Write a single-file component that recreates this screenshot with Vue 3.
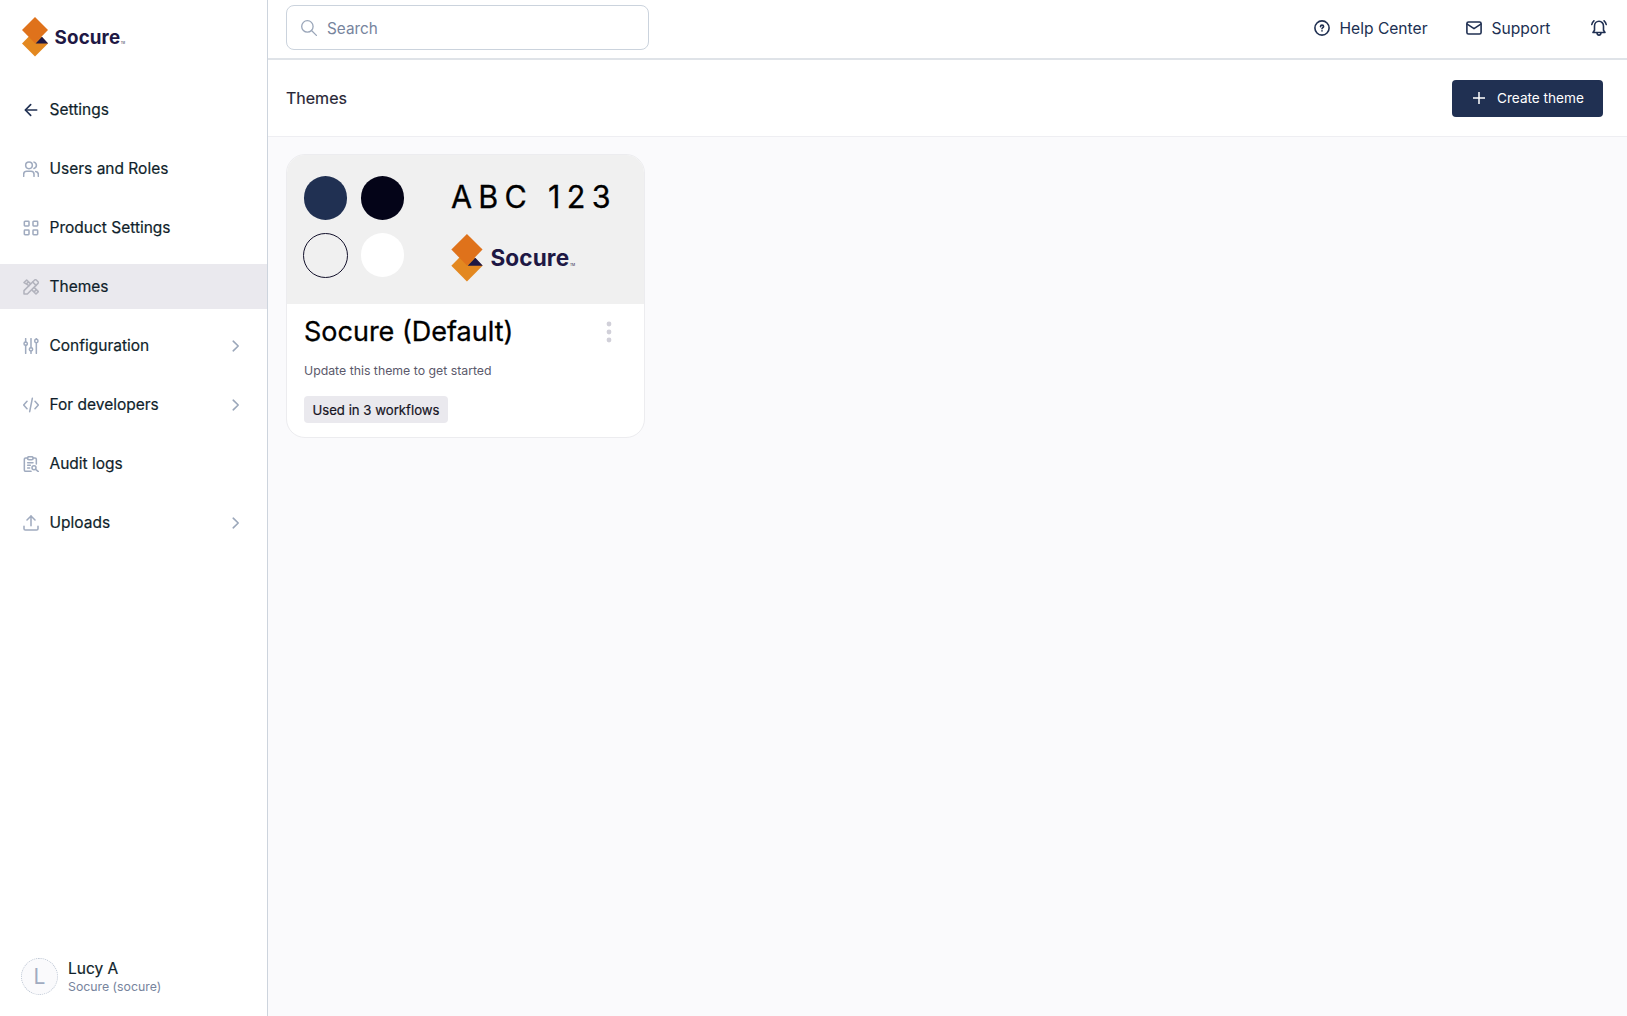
<template>
  <div class="layout">
    <aside class="sidebar">
      <svg class="logo" viewBox="0 0 104 40">
        <path d="M13 13.2L26 26.4L13 39.6L0 26.4z" fill="#e38820" />
        <path d="M13 0L26 13L13 26.2L0 13z" fill="#df721b" />
        <path d="M13.6 26.4L20 19.8L26.2 26.4z" fill="#1e1844" />
        <text class="logo-word" x="32.6" y="26.5" textLength="65.5">Socure</text>
        <text class="logo-tm" x="98.8" y="26.5">TM</text>
      </svg>

      <nav class="nav">
        <a v-for="item in navItems" :key="item.label" class="nav-item" :class="{ active: item.label === current }">
          <svg class="nav-icon" :class="{ back: item.icon === 'back' }" viewBox="0 0 24 24">
            <path v-for="d in icons[item.icon]" :key="d" :d="d" />
          </svg>
          <span class="nav-label">{{ item.label }}</span>
          <svg v-if="item.expandable" class="chevron" viewBox="0 0 8 12">
            <path d="M1.2 1.2L6.2 6L1.2 10.8" />
          </svg>
        </a>
      </nav>

      <div class="user">
        <div class="avatar">L</div>
        <div class="user-info">
          <span class="user-name">Lucy A</span>
          <span class="user-org">Socure (socure)</span>
        </div>
      </div>
    </aside>

    <main class="main">
      <header class="topbar">
        <label class="search">
          <svg class="search-icon" viewBox="0 0 16 16">
            <circle cx="6.4" cy="6.4" r="5.7" />
            <path d="M10.5 10.5L15.4 15.4" />
          </svg>
          <input class="search-input" type="text" placeholder="Search" />
        </label>
        <div class="top-links">
          <a class="top-link help">
            <svg class="top-icon" viewBox="0 0 16 16">
              <circle cx="8" cy="8" r="7.1" />
              <path d="M6.5 6.6C6.6 5.6 7.2 5.1 8 5.1C9 5.1 9.6 5.7 9.6 6.5C9.6 7.6 8 7.6 8 8.8M8 10.8V11" />
            </svg>
            <span>Help Center</span>
          </a>
          <a class="top-link support">
            <svg class="top-icon" viewBox="0 0 16 16">
              <rect x="0.9" y="2" width="14.2" height="12" rx="1.6" />
              <path d="M1.2 4.2L8 8.6L14.8 4.2" />
            </svg>
            <span>Support</span>
          </a>
          <svg class="top-icon" viewBox="0 0 16 16">
            <path d="M2 12.5H14L12.5 10.2V6.2C12.5 3.3 10.5 1.2 8 1.2S3.5 3.3 3.5 6.2V10.2zM6 12.8C6 14.1 6.9 15.1 8 15.1S10 14.1 10 12.8M0.8 4.5C1 3 1.7 1.8 2.9 0.8M15.2 4.5C15 3 14.3 1.8 13.1 0.8" />
          </svg>
        </div>
      </header>

      <div class="page-header">
        <h1 class="page-title">Themes</h1>
        <button class="create-btn">
          <svg class="plus" viewBox="0 0 12 12"><path d="M6 0V12M0 6H12" /></svg>
          <span>Create theme</span>
        </button>
      </div>

      <section class="content">
        <article class="card">
          <div class="preview">
            <div class="swatches">
              <span v-for="name in swatches" :key="name" class="swatch" :class="name"></span>
            </div>
            <div class="brand">
              <span class="sample">ABC 123</span>
              <svg class="brand-logo" viewBox="0 0 104 40">
                <path d="M13 13.2L26 26.4L13 39.6L0 26.4z" fill="#e38820" />
                <path d="M13 0L26 13L13 26.2L0 13z" fill="#df721b" />
                <path d="M13.6 26.4L20 19.8L26.2 26.4z" fill="#1e1844" />
                <text class="logo-word" x="32.6" y="26.5" textLength="65.5">Socure</text>
                <text class="logo-tm" x="98.8" y="26.5">TM</text>
              </svg>
            </div>
          </div>
          <div class="card-body">
            <div class="card-head">
              <h2 class="card-title">Socure (Default)</h2>
              <svg class="dots" viewBox="0 0 6 22">
                <circle cx="3" cy="3" r="2.4" />
                <circle cx="3" cy="11" r="2.4" />
                <circle cx="3" cy="19" r="2.4" />
              </svg>
            </div>
            <p class="card-desc">Update this theme to get started</p>
            <span class="tag">Used in 3 workflows</span>
          </div>
        </article>
      </section>
    </main>
  </div>
</template>

<script setup>
import { ref } from 'vue'

const current = ref('Themes')

const navItems = [
  { label: 'Settings', icon: 'back' },
  { label: 'Users and Roles', icon: 'users' },
  { label: 'Product Settings', icon: 'grid' },
  { label: 'Themes', icon: 'tools' },
  { label: 'Configuration', icon: 'sliders', expandable: true },
  { label: 'For developers', icon: 'code', expandable: true },
  { label: 'Audit logs', icon: 'audit' },
  { label: 'Uploads', icon: 'upload', expandable: true }
]

const swatches = ['primary', 'dark', 'outline', 'light']

const icons = {
  back: ['M20.5 12H4', 'M11.5 4L3.5 12L11.5 20'],
  users: [
    'M4 6.5a5 5 0 1 0 10 0a5 5 0 1 0 -10 0',
    'M1 23v-3a4.5 4.5 0 0 1 4.5 -4.5h6.5a4.5 4.5 0 0 1 4.5 4.5v3',
    'M16.5 1.7a5 5 0 0 1 0 9.6',
    'M19 15.7a4.5 4.5 0 0 1 4 4.5v2.8'
  ],
  grid: [
    'M3 2h5a1 1 0 0 1 1 1v5a1 1 0 0 1 -1 1h-5a1 1 0 0 1 -1 -1v-5a1 1 0 0 1 1 -1z',
    'M16 2h5a1 1 0 0 1 1 1v5a1 1 0 0 1 -1 1h-5a1 1 0 0 1 -1 -1v-5a1 1 0 0 1 1 -1z',
    'M3 15h5a1 1 0 0 1 1 1v5a1 1 0 0 1 -1 1h-5a1 1 0 0 1 -1 -1v-5a1 1 0 0 1 1 -1z',
    'M16 15h5a1 1 0 0 1 1 1v5a1 1 0 0 1 -1 1h-5a1 1 0 0 1 -1 -1v-5a1 1 0 0 1 1 -1z'
  ],
  tools: [
    'M1.5 22.5v-5L17.5 1.5q1.2 -1 2.4 0l2.6 2.6q1 1.2 0 2.4L6.5 22.5z',
    'M14.5 4.5l5 5',
    'M9 10L1.5 5.5L5.5 1.5L11 7M5 7.5l2 -2',
    'M14 17l5.5 5.5l3.5 -3.5L17 13M17 19l2 -2'
  ],
  sliders: [
    'M4 1v5M4 11v12M12 1v13M12 19.5v3.5M20 1v1M20 7v16',
    'M1.5 8.5a2.5 2.5 0 1 0 5 0a2.5 2.5 0 1 0 -5 0',
    'M9.5 17a2.5 2.5 0 1 0 5 0a2.5 2.5 0 1 0 -5 0',
    'M17.5 4.5a2.5 2.5 0 1 0 5 0a2.5 2.5 0 1 0 -5 0'
  ],
  code: ['M6 6.5L1 12L6 17.5', 'M18 6.5L23 12L18 17.5', 'M14 2L10 22'],
  audit: [
    'M7 3H4a2 2 0 0 0 -2 2v16a2 2 0 0 0 2 2h8M15 3h3a2 2 0 0 1 2 2v7',
    'M9 1h4a2 2 0 0 1 0 4.5h-4a2 2 0 0 1 0 -4.5z',
    'M7 10h8M7 14h4M7 18h3',
    'M13.5 17.5a3 3 0 1 0 6 0a3 3 0 1 0 -6 0M19 20l4 3.5'
  ],
  upload: ['M12 16V1.5', 'M6 7.5L12 1.5L18 7.5', 'M1.5 17v3.5a2 2 0 0 0 2 2h17a2 2 0 0 0 2 -2V17']
}
</script>

<style>
body {
  background: #fafafc;
}
</style>

<style scoped>
.layout {
  display: flex;
  height: 100vh;
  overflow: hidden;
  font-family: Inter, 'Liberation Sans', sans-serif;
  color: #101f2b;
}

svg {
  display: block;
  flex-shrink: 0;
  fill: none;
  stroke-linecap: round;
  stroke-linejoin: round;
}

.sidebar {
  box-sizing: border-box;
  width: 268px;
  flex-shrink: 0;
  display: flex;
  flex-direction: column;
  background: #fff;
  border-right: 1px solid #cdd4dd;
}

.logo {
  width: 104px;
  height: 40px;
  margin: 17px 0 30px 22px;
}

.logo-word {
  fill: #1e1844;
  font-size: 18.8px;
  font-weight: 750;
}

.logo-tm {
  fill: #1e1844;
  font-size: 2.8px;
}

.nav {
  display: flex;
  flex-direction: column;
  gap: 14px;
}

.nav-item {
  display: flex;
  align-items: center;
  height: 45px;
  padding: 0 27px 0 23px;
}

.nav-item.active {
  background: #eae9ee;
}

.nav-icon {
  width: 16px;
  height: 16px;
  margin-right: 10.5px;
  stroke: #a0abbf;
  stroke-width: 2.3;
}

.nav-icon.back {
  stroke: #203052;
  stroke-width: 2.5;
}

.active .nav-icon {
  stroke: #b2b3bd;
}

.nav-label {
  flex: 1;
  font-size: 15.5px;
  -webkit-text-stroke: 0.2px currentColor;
}

.chevron {
  width: 8px;
  height: 12px;
  stroke: #9ba7ba;
  stroke-width: 1.6;
}

.user {
  display: flex;
  align-items: center;
  gap: 10px;
  margin-top: auto;
  padding: 0 0 21px 21px;
}

.avatar {
  box-sizing: border-box;
  width: 37px;
  height: 37px;
  border: 1px dotted #b9c3d1;
  border-radius: 50%;
  background: #fafafc;
  color: #a0abc0;
  font-size: 21px;
  line-height: 35px;
  text-align: center;
}

.user-info {
  display: flex;
  flex-direction: column;
}

.user-name {
  font-size: 15.5px;
  line-height: 20px;
  -webkit-text-stroke: 0.2px currentColor;
}

.user-org {
  color: #77849d;
  font-size: 12.3px;
  line-height: 16px;
}

.main {
  flex: 1;
  display: flex;
  flex-direction: column;
}

.topbar {
  box-sizing: border-box;
  display: flex;
  justify-content: space-between;
  align-items: center;
  height: 60px;
  padding: 0 20.5px 3px 18px;
  background: #fff;
  border-bottom: 2px solid #dfe3e8;
}

.search {
  box-sizing: border-box;
  display: flex;
  align-items: center;
  gap: 10px;
  width: 363px;
  height: 45px;
  padding: 0 14px;
  border: 1px solid #cbd3dd;
  border-radius: 8px;
}

.search-icon {
  width: 16px;
  height: 16px;
  stroke: #9aa6b9;
  stroke-width: 1.3;
}

.search-input {
  flex: 1;
  padding: 1px 0 0;
  border: none;
  outline: none;
  background: none;
  font-family: inherit;
  font-size: 15.3px;
}

.search-input::placeholder {
  color: #77849d;
  opacity: 1;
}

.top-links {
  display: flex;
  align-items: center;
  color: #203052;
}

.top-link {
  display: flex;
  align-items: center;
  gap: 10px;
  font-size: 15.6px;
}

.top-link span {
  padding-top: 1px;
}

.help {
  width: 152px;
}

.support {
  width: 125px;
}

.top-icon {
  width: 16px;
  height: 16px;
  stroke: #203052;
  stroke-width: 1.6;
}

.page-header {
  box-sizing: border-box;
  display: flex;
  justify-content: space-between;
  align-items: center;
  height: 77px;
  padding: 0 24px 0 18px;
  background: #fff;
  border-bottom: 1px solid #eeeef2;
}

.page-title {
  margin: 0;
  color: #272535;
  font-size: 16px;
  font-weight: 400;
  -webkit-text-stroke: 0.2px currentColor;
}

.create-btn {
  display: flex;
  align-items: center;
  gap: 12px;
  width: 151px;
  height: 37px;
  padding: 0 0 0 21px;
  border: none;
  border-radius: 4px;
  background: #203052;
  color: #fff;
  font-family: inherit;
  font-size: 13.6px;
}

.plus {
  width: 12px;
  height: 12px;
  stroke: #fff;
  stroke-width: 1.5;
}

.content {
  flex: 1;
  padding: 17px 18px;
  background: #fafafc;
}

.card {
  box-sizing: border-box;
  width: 359px;
  height: 284px;
  overflow: hidden;
  background: #fff;
  border: 1px solid #ececef;
  border-radius: 19px;
}

.preview {
  box-sizing: border-box;
  display: flex;
  height: 149px;
  padding: 20.5px 0 0 16px;
  background: #f0f0f0;
}

.swatches {
  display: grid;
  grid-template-columns: 45px 45px;
  grid-auto-rows: 45px;
  gap: 12px;
  place-items: center;
  align-content: start;
}

.swatch {
  box-sizing: border-box;
  width: 43.5px;
  height: 43.5px;
  border-radius: 50%;
}

.swatch.primary {
  background: #203052;
}

.swatch.dark {
  background: #040418;
}

.swatch.outline {
  width: 45px;
  height: 45px;
  border: 1px solid #12102a;
}

.swatch.light {
  background: #fff;
}

.brand {
  display: flex;
  flex-direction: column;
  margin-left: 46px;
}

.sample {
  color: #000;
  font-size: 30.5px;
  line-height: 41px;
  letter-spacing: 6.3px;
  white-space: nowrap;
  -webkit-text-stroke: 0.3px currentColor;
}

.brand-logo {
  width: 125.5px;
  height: 48px;
  margin-top: 17px;
}

.card-body {
  padding: 8px 32px 0 17px;
}

.card-head {
  display: flex;
  justify-content: space-between;
  align-items: center;
}

.card-title {
  margin: 0;
  color: #000;
  font-size: 27px;
  font-weight: 400;
  line-height: 39px;
  -webkit-text-stroke: 0.3px currentColor;
}

.dots {
  width: 6px;
  height: 22px;
  fill: #d1d0d9;
}

.card-desc {
  margin: 11px 0 16px;
  color: #5b596b;
  font-size: 12.3px;
  line-height: 18px;
}

.tag {
  display: inline-block;
  box-sizing: border-box;
  width: 144px;
  height: 27px;
  padding-top: 1px;
  border-radius: 4px;
  background: #eae9ee;
  color: #16141f;
  font-size: 13.2px;
  line-height: 27px;
  text-align: center;
  white-space: nowrap;
  -webkit-text-stroke: 0.2px currentColor;
}
</style>
